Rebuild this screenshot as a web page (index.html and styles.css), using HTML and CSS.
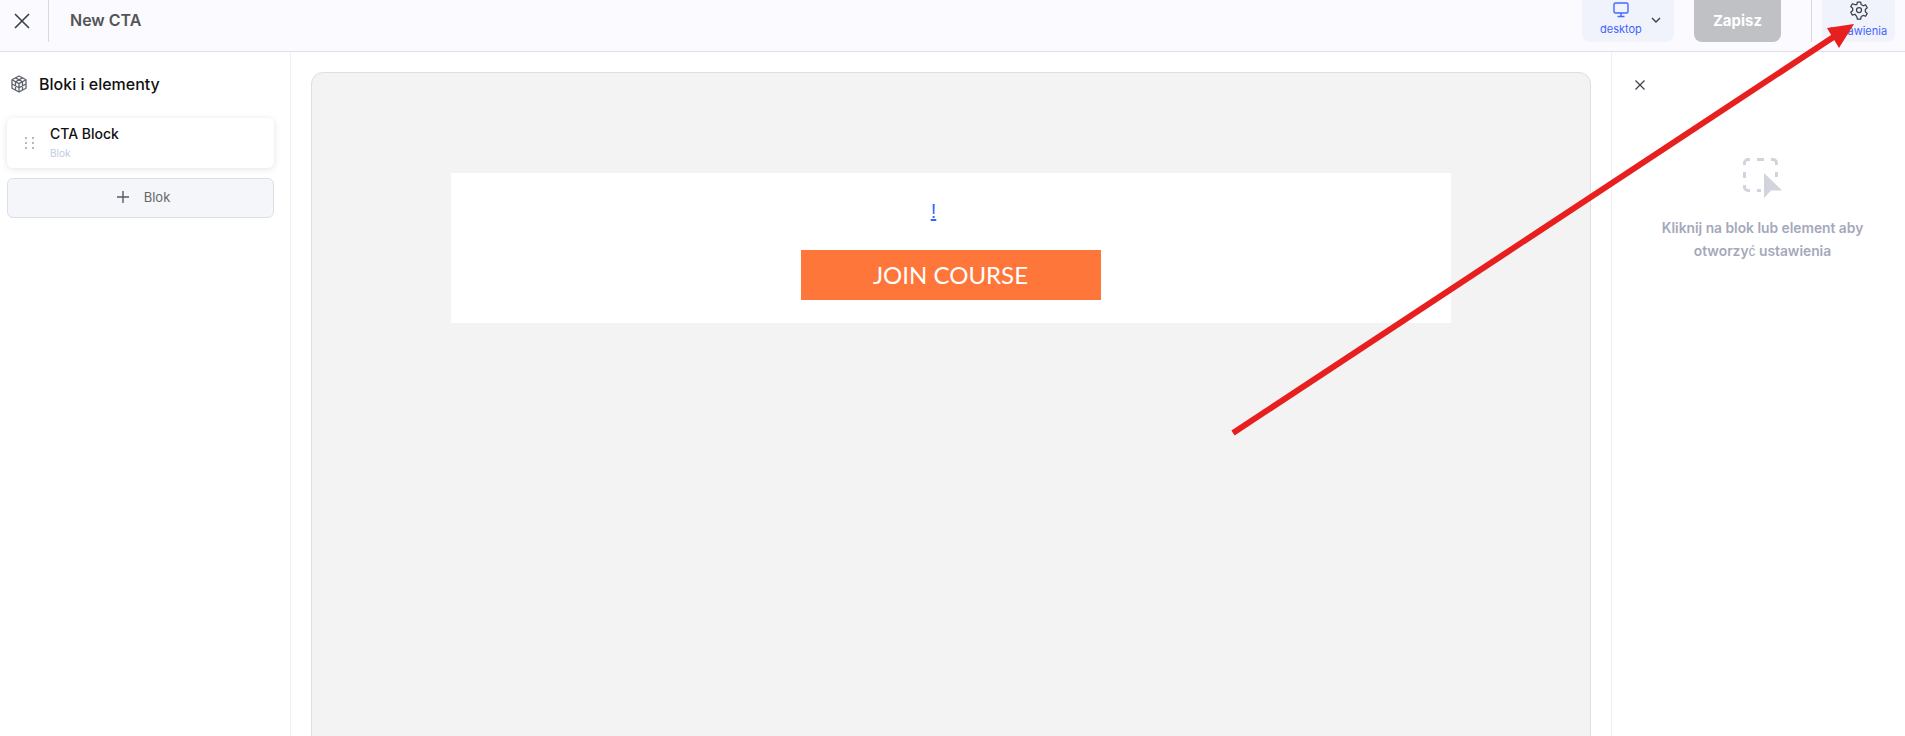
FILE: index.html
```html
<!DOCTYPE html>
<html lang="en">
<head>
    <meta charset="UTF-8">
    <title>New CTA</title>
    <link rel="stylesheet" href="styles.css">
</head>
<body>
    <header class="topbar">
        <button class="close-btn" aria-label="Close">
            <svg width="18" height="18" viewBox="0 0 18 18" fill="none" stroke="#3a3f4a" stroke-width="1.6"><path d="M2 2l14 14M16 2L2 16"/></svg>
        </button>
        <div class="title">New CTA</div>
        <div class="device">
            <div class="device-label">
                <svg width="16" height="16" viewBox="0 0 16 16" fill="none" stroke="#4668ff" stroke-width="1.4"><rect x="1" y="1" width="14" height="10" rx="1.500"/><path d="M8 11v3.500M4.500 14.500h7"/></svg>
                <span>desktop</span>
            </div>
            <svg class="chevron" width="10" height="6" viewBox="0 0 10 6" fill="none" stroke="#3a3f4a" stroke-width="1.4"><path d="M1 1l4 4 4-4"/></svg>
        </div>
        <button class="save">Zapisz</button>
        <div class="settings">
            <svg width="20" height="20" viewBox="0 0 24 24" fill="none" stroke="#3a3f4a" stroke-width="1.5" stroke-linecap="round" stroke-linejoin="round"><circle cx="12" cy="12" r="3"/><path d="M10 2.500h4l.6 3 2.400 1.400 2.900-1 2 3.400-2.300 2v2.800l2.300 2-2 3.400-2.900-1-2.400 1.400-.6 3h-4l-.6-3L7 17.100l-2.900 1-2-3.400 2.300-2v-2.800l-2.300-2 2-3.400 2.900 1L9.400 5.500z"/></svg>
            <span>Ustawienia</span>
        </div>
    </header>

    <div class="workspace">
        <aside class="sidebar">
            <div class="sidebar-title">
                <svg width="18" height="18" viewBox="0 0 18 18" fill="none" stroke="#5c616c" stroke-width="1.300" stroke-linejoin="round"><path d="M9 1l7 3.800v8.400L9 17l-7-3.800V4.800z"/><path d="M2 4.800l7 3.800 7-3.800M9 8.600V17M5.500 2.900l7 3.800v8.400M12.500 2.900l-7 3.800v8.400M2 9l7 3.800L16 9"/></svg>
                <span>Bloki i elementy</span>
            </div>
            <div class="block-card">
                <div class="drag-dots"><i></i><i></i><i></i><i></i><i></i><i></i></div>
                <div>
                    <div class="block-name">CTA Block</div>
                    <div class="block-type">Blok</div>
                </div>
            </div>
            <button class="add-block">
                <svg width="12" height="12" viewBox="0 0 12 12" stroke="#555b66" stroke-width="1.4"><path d="M6 0v12M0 6h12"/></svg>
                <span>Blok</span>
            </button>
        </aside>

        <main class="stage">
            <div class="canvas">
                <div class="cta">
                    <a class="cta-link" href="#">!</a>
                    <a class="cta-button" href="#">JOIN COURSE</a>
                </div>
            </div>
        </main>

        <aside class="inspector">
            <svg class="inspector-close" width="10" height="10" viewBox="0 0 10 10" stroke="#3a3f4a" stroke-width="1.200"><path d="M.5.500l9 9M9.500.500l-9 9"/></svg>
            <div class="empty">
                <svg width="40" height="42" viewBox="0 0 40 42" fill="none">
                    <path d="M1.500 7V5a3.500 3.500 0 0 1 3.500-3.500h2M14 1.500h7M28 1.500h2a3.500 3.500 0 0 1 3.500 3.500v2M1.500 14v6M33.500 14v5M1.500 27v2a3.500 3.500 0 0 0 3.500 3.500h2M14 32.500h4" stroke="#d1d4dd" stroke-width="3"/>
                    <path d="M21 15l18 17.500H28L21 40z" fill="#d1d4dd"/>
                </svg>
                <p>Kliknij na blok lub element aby<br>otworzy<span class="fallback">ć</span> ustawienia</p>
            </div>
        </aside>
    </div>

    <!-- annotation arrow drawn on top of the screenshot -->
    <svg class="annotation" width="1905" height="736" viewBox="0 0 1905 736">
        <path d="M1233 433L1835 36" stroke="#e81f1f" stroke-width="6"/>
        <path d="M1854 24l-27 4 12 20z" fill="#e81f1f"/>
    </svg>
</body>
</html>
```

FILE: styles.css
```css
* {
    box-sizing: border-box;
}

html, body {
    height: 100%;
}

body {
    margin: 0;
    font-family: Inter, "Noto Sans", sans-serif;
    background: #fff;
    display: flex;
    flex-direction: column;
    overflow: hidden;
}

button {
    font-family: inherit;
    border: none;
    padding: 0;
}

.topbar {
    height: 52px;
    flex: none;
    display: flex;
    align-items: flex-start;
    background: #fafaff;
    border-bottom: 1px solid #e0e0ea;
}

.close-btn {
    width: 49px;
    height: 42px;
    background: none;
    border-right: 1px solid #d8d8de;
    padding-right: 4px;
    display: flex;
    align-items: center;
    justify-content: center;
}

.title {
    margin-left: 21px;
    margin-right: auto;
    line-height: 40px;
    font-size: 16px;
    font-weight: 600;
    color: #555;
}

.device {
    width: 92px;
    height: 42px;
    margin-right: 20px;
    padding: 2px 13px 0 18px;
    background: #f0f3fb;
    border-radius: 0 0 8px 8px;
    display: flex;
    align-items: flex-start;
    justify-content: space-between;
}

.device-label {
    display: flex;
    flex-direction: column;
    align-items: center;
    gap: 4px;
    font-size: 11px;
    line-height: 14px;
    color: #3f63ff;
}

.chevron {
    margin-top: 15px;
}

.save {
    width: 87px;
    height: 42px;
    padding-bottom: 2px;
    background: #bfc1c4;
    border-radius: 0 0 8px 8px;
    color: #fff;
    font-size: 15px;
    font-weight: 700;
}

.settings {
    width: 73px;
    height: 42px;
    margin-left: 41px;
    margin-right: 10px;
    position: relative;
    background: #f0f3fb;
    border-radius: 0 0 8px 8px;
    display: flex;
    flex-direction: column;
    align-items: center;
    gap: 4px;
    font-size: 11px;
    line-height: 14px;
    color: #3f63ff;
}

.settings::before {
    content: "";
    position: absolute;
    left: -11px;
    top: 0;
    width: 1px;
    height: 42px;
    background: #d8d8de;
}

.workspace {
    flex: 1;
    display: flex;
    min-height: 0;
}

.sidebar {
    width: 291px;
    flex: none;
    padding: 0 16px 0 7px;
    border-right: 1px solid #f0f0f4;
}

.sidebar-title {
    height: 64px;
    margin-bottom: 2px;
    display: flex;
    align-items: center;
    gap: 11px;
    padding-left: 3px;
    font-size: 16px;
    font-weight: 500;
    color: #111;
}

.block-card {
    height: 50px;
    padding: 0 0 2px 18px;
    display: flex;
    align-items: center;
    gap: 16px;
    background: #fff;
    border-radius: 6px;
    box-shadow: 0 1px 6px rgba(50, 60, 100, 0.14);
}

.drag-dots {
    display: grid;
    grid-template-columns: 2px 2px;
    gap: 3px 5px;
    width: 9px;
    margin-top: 2px;
}

.drag-dots i {
    width: 2px;
    height: 2px;
    background: #b4b8c2;
}

.block-name {
    font-size: 14px;
    font-weight: 500;
    line-height: 18px;
    color: #111;
}

.block-type {
    margin-top: 3px;
    font-size: 10px;
    line-height: 14px;
    color: #c0cbe0;
}

.add-block {
    width: 100%;
    height: 40px;
    margin-top: 10px;
    padding: 0 0 2px 6px;
    background: #f4f6fa;
    border: 1px solid #dddfe8;
    border-radius: 6px;
    display: flex;
    align-items: center;
    justify-content: center;
    gap: 15px;
    font-size: 13px;
    color: #666;
}

.stage {
    flex: 1;
    min-width: 0;
    padding: 20px 20px 0 20px;
    overflow: hidden;
    border-right: 1px solid #f0f0f4;
}

.canvas {
    height: 800px;
    padding: 100px 1px 0 0;
    background: #f3f3f3;
    border: 1px solid #dedee8;
    border-radius: 12px;
}

.cta {
    width: 1000px;
    height: 150px;
    margin: 0 auto;
    background: #fff;
    display: flex;
    flex-direction: column;
    align-items: center;
}

.cta-link {
    margin: 27px 34px 0 0;
    height: 50px;
    font-family: "Liberation Sans", sans-serif;
    font-size: 20px;
    line-height: 22px;
    color: #3366ff;
}

.cta-button {
    width: 300px;
    height: 50px;
    background: #ff763b;
    color: #fff;
    font-family: Lato, sans-serif;
    font-size: 24px;
    line-height: 50px;
    text-align: center;
    text-decoration: none;
}

.inspector {
    width: 293px;
    flex: none;
    padding: 28px 20px 0 28px;
}

.inspector-close {
    display: block;
    margin-left: -5px;
}

.empty {
    padding-top: 68px;
    display: flex;
    flex-direction: column;
    align-items: center;
}

.empty p {
    margin: 17px 0 0;
    text-align: center;
    font-size: 13.8px;
    font-weight: 600;
    line-height: 23px;
    color: #a5a8bb;
}

.fallback {
    font-family: "Liberation Sans", sans-serif;
    font-weight: 400;
}

.annotation {
    position: absolute;
    left: 0;
    top: 0;
    pointer-events: none;
}
```
